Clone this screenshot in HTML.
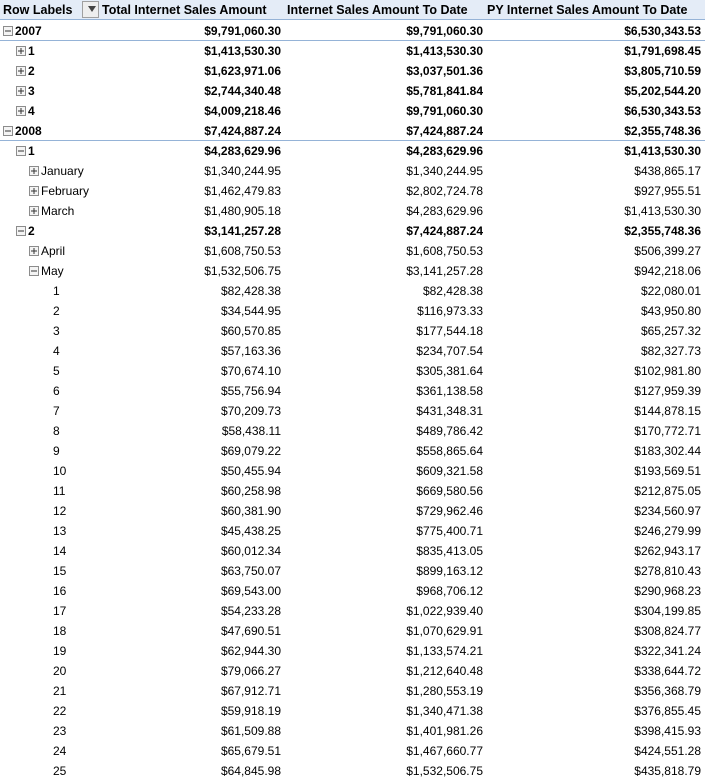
<!DOCTYPE html>
<html><head><meta charset="utf-8"><style>
body{margin:0;background:#fff;width:705px;height:780px;overflow:hidden;font-family:"Liberation Sans",Arial,sans-serif;font-size:12px;color:#000}
.hd{position:relative;height:20px;background:#e4ecf7;box-shadow:inset 0 -1px #95b3d7;font-weight:bold;font-size:12.5px;line-height:20px}
.hd span{position:absolute;top:0;white-space:nowrap}
table{border-collapse:collapse;table-layout:fixed;width:705px}
td{height:20px;padding:0 2px 0 0;white-space:nowrap;overflow:hidden;text-align:right;line-height:20px}
td:first-child{text-align:left;padding:0}
td span.t{position:relative;top:1px}
tr.b td{font-weight:bold}
tr.y td{box-shadow:inset 0 -1px #95b3d7}
.i{display:inline-block;width:8px;height:8px;border:1px solid #8c8c8c;background:#f4f4f4;position:relative;vertical-align:-1px;margin-right:2px}
.i:before{content:"";position:absolute;left:1px;top:3px;width:6px;height:2px;background:#333;transform:scaleY(.5)}
.i.p:after{content:"";position:absolute;left:3px;top:1px;width:2px;height:6px;background:#333;transform:scaleX(.5)}
.f{display:inline-block;width:15px;height:15px;border:1px solid #a0a0a0;background:#eee;position:absolute;left:82px;top:1px}
.f:after{content:"";position:absolute;left:5px;top:4px;border-left:4px solid transparent;border-right:4px solid transparent;border-top:6px solid #444}
.w{position:relative;top:1px}
</style></head><body>
<div class="hd"><span style="left:3px">Row Labels</span><i class="f"></i><span style="left:102px">Total Internet Sales Amount</span><span style="left:287px">Internet Sales Amount To Date</span><span style="left:487px">PY Internet Sales Amount To Date</span></div>
<div class="w">
<table>
<colgroup><col style="width:199px"><col style="width:84px"><col style="width:202px"><col style="width:220px"></colgroup>
<tr class="b y"><td style="padding-left:3px"><span class="i"></span>2007</td><td>$9,791,060.30</td><td>$9,791,060.30</td><td style="padding-right:4px">$6,530,343.53</td></tr>
<tr class="b"><td style="padding-left:16px"><span class="i p"></span>1</td><td>$1,413,530.30</td><td>$1,413,530.30</td><td style="padding-right:4px">$1,791,698.45</td></tr>
<tr class="b"><td style="padding-left:16px"><span class="i p"></span>2</td><td>$1,623,971.06</td><td>$3,037,501.36</td><td style="padding-right:4px">$3,805,710.59</td></tr>
<tr class="b"><td style="padding-left:16px"><span class="i p"></span>3</td><td>$2,744,340.48</td><td>$5,781,841.84</td><td style="padding-right:4px">$5,202,544.20</td></tr>
<tr class="b"><td style="padding-left:16px"><span class="i p"></span>4</td><td>$4,009,218.46</td><td>$9,791,060.30</td><td style="padding-right:4px">$6,530,343.53</td></tr>
<tr class="b y"><td style="padding-left:3px"><span class="i"></span>2008</td><td>$7,424,887.24</td><td>$7,424,887.24</td><td style="padding-right:4px">$2,355,748.36</td></tr>
<tr class="b"><td style="padding-left:16px"><span class="i"></span>1</td><td>$4,283,629.96</td><td>$4,283,629.96</td><td style="padding-right:4px">$1,413,530.30</td></tr>
<tr><td style="padding-left:29px"><span class="i p"></span>January</td><td>$1,340,244.95</td><td>$1,340,244.95</td><td style="padding-right:4px">$438,865.17</td></tr>
<tr><td style="padding-left:29px"><span class="i p"></span>February</td><td>$1,462,479.83</td><td>$2,802,724.78</td><td style="padding-right:4px">$927,955.51</td></tr>
<tr><td style="padding-left:29px"><span class="i p"></span>March</td><td>$1,480,905.18</td><td>$4,283,629.96</td><td style="padding-right:4px">$1,413,530.30</td></tr>
<tr class="b"><td style="padding-left:16px"><span class="i"></span>2</td><td>$3,141,257.28</td><td>$7,424,887.24</td><td style="padding-right:4px">$2,355,748.36</td></tr>
<tr><td style="padding-left:29px"><span class="i p"></span>April</td><td>$1,608,750.53</td><td>$1,608,750.53</td><td style="padding-right:4px">$506,399.27</td></tr>
<tr><td style="padding-left:29px"><span class="i"></span>May</td><td>$1,532,506.75</td><td>$3,141,257.28</td><td style="padding-right:4px">$942,218.06</td></tr>
<tr><td style="padding-left:53px">1</td><td>$82,428.38</td><td>$82,428.38</td><td style="padding-right:4px">$22,080.01</td></tr>
<tr><td style="padding-left:53px">2</td><td>$34,544.95</td><td>$116,973.33</td><td style="padding-right:4px">$43,950.80</td></tr>
<tr><td style="padding-left:53px">3</td><td>$60,570.85</td><td>$177,544.18</td><td style="padding-right:4px">$65,257.32</td></tr>
<tr><td style="padding-left:53px">4</td><td>$57,163.36</td><td>$234,707.54</td><td style="padding-right:4px">$82,327.73</td></tr>
<tr><td style="padding-left:53px">5</td><td>$70,674.10</td><td>$305,381.64</td><td style="padding-right:4px">$102,981.80</td></tr>
<tr><td style="padding-left:53px">6</td><td>$55,756.94</td><td>$361,138.58</td><td style="padding-right:4px">$127,959.39</td></tr>
<tr><td style="padding-left:53px">7</td><td>$70,209.73</td><td>$431,348.31</td><td style="padding-right:4px">$144,878.15</td></tr>
<tr><td style="padding-left:53px">8</td><td>$58,438.11</td><td>$489,786.42</td><td style="padding-right:4px">$170,772.71</td></tr>
<tr><td style="padding-left:53px">9</td><td>$69,079.22</td><td>$558,865.64</td><td style="padding-right:4px">$183,302.44</td></tr>
<tr><td style="padding-left:53px">10</td><td>$50,455.94</td><td>$609,321.58</td><td style="padding-right:4px">$193,569.51</td></tr>
<tr><td style="padding-left:53px">11</td><td>$60,258.98</td><td>$669,580.56</td><td style="padding-right:4px">$212,875.05</td></tr>
<tr><td style="padding-left:53px">12</td><td>$60,381.90</td><td>$729,962.46</td><td style="padding-right:4px">$234,560.97</td></tr>
<tr><td style="padding-left:53px">13</td><td>$45,438.25</td><td>$775,400.71</td><td style="padding-right:4px">$246,279.99</td></tr>
<tr><td style="padding-left:53px">14</td><td>$60,012.34</td><td>$835,413.05</td><td style="padding-right:4px">$262,943.17</td></tr>
<tr><td style="padding-left:53px">15</td><td>$63,750.07</td><td>$899,163.12</td><td style="padding-right:4px">$278,810.43</td></tr>
<tr><td style="padding-left:53px">16</td><td>$69,543.00</td><td>$968,706.12</td><td style="padding-right:4px">$290,968.23</td></tr>
<tr><td style="padding-left:53px">17</td><td>$54,233.28</td><td>$1,022,939.40</td><td style="padding-right:4px">$304,199.85</td></tr>
<tr><td style="padding-left:53px">18</td><td>$47,690.51</td><td>$1,070,629.91</td><td style="padding-right:4px">$308,824.77</td></tr>
<tr><td style="padding-left:53px">19</td><td>$62,944.30</td><td>$1,133,574.21</td><td style="padding-right:4px">$322,341.24</td></tr>
<tr><td style="padding-left:53px">20</td><td>$79,066.27</td><td>$1,212,640.48</td><td style="padding-right:4px">$338,644.72</td></tr>
<tr><td style="padding-left:53px">21</td><td>$67,912.71</td><td>$1,280,553.19</td><td style="padding-right:4px">$356,368.79</td></tr>
<tr><td style="padding-left:53px">22</td><td>$59,918.19</td><td>$1,340,471.38</td><td style="padding-right:4px">$376,855.45</td></tr>
<tr><td style="padding-left:53px">23</td><td>$61,509.88</td><td>$1,401,981.26</td><td style="padding-right:4px">$398,415.93</td></tr>
<tr><td style="padding-left:53px">24</td><td>$65,679.51</td><td>$1,467,660.77</td><td style="padding-right:4px">$424,551.28</td></tr>
<tr><td style="padding-left:53px">25</td><td>$64,845.98</td><td>$1,532,506.75</td><td style="padding-right:4px">$435,818.79</td></tr>
</table>
</div>
</body></html>
